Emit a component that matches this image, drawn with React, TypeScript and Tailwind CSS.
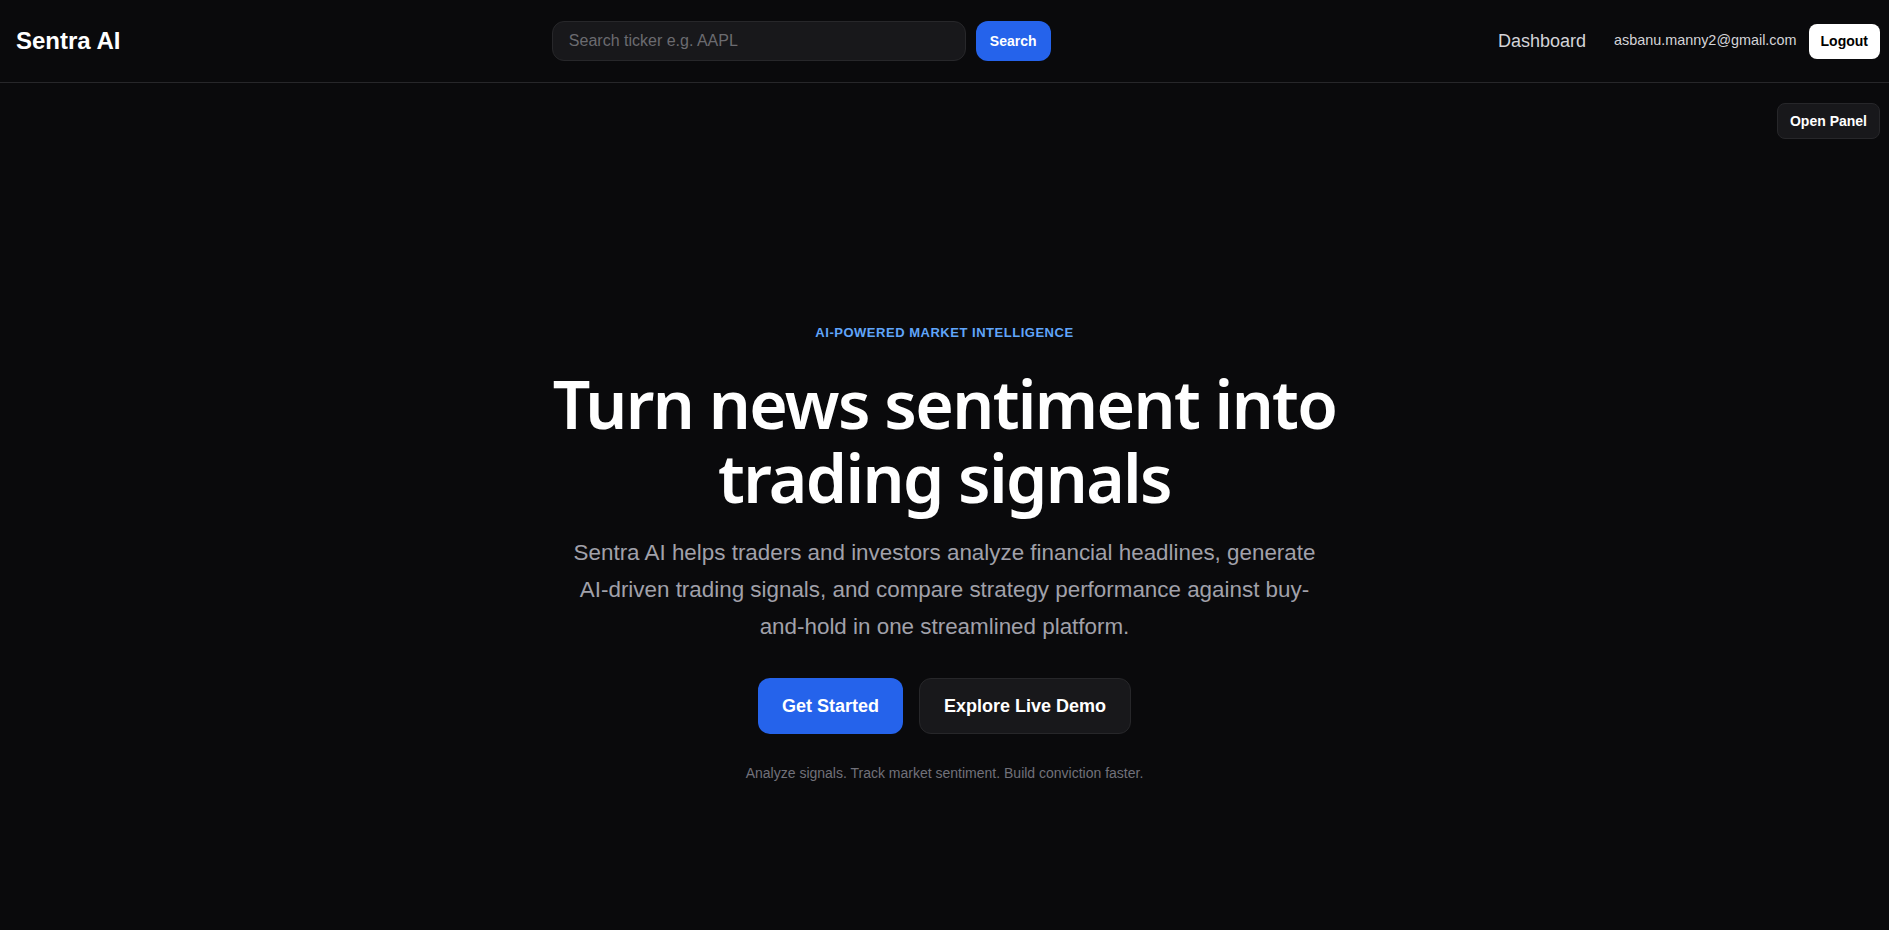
import { FC } from "react";

const Header: FC = () => {
  return (
    <header className="flex h-[83px] items-center justify-between border-b border-[#27272a] pl-4 pr-[9px]">
      <div className="text-2xl font-bold text-white">Sentra AI</div>

      <form
        className="flex items-center gap-2.5"
        onSubmit={(e) => e.preventDefault()}
      >
        <input
          type="text"
          placeholder="Search ticker e.g. AAPL"
          className="h-10 w-[414px] rounded-xl border border-[#27272a] bg-[#18181b] px-4 text-base text-white outline-none placeholder:text-[#6b6b70]"
        />
        <button
          type="submit"
          className="h-10 rounded-xl bg-[#2563eb] px-[14px] text-sm font-bold text-white"
        >
          Search
        </button>
      </form>

      <nav className="flex items-center gap-3">
        <a href="#" className="py-1 pl-4 pr-[16px] text-lg text-[#d4d4d8]">
          Dashboard
        </a>
        <span className="text-[14.4px] text-[#d4d4d8]">
          asbanu.manny2@gmail.com
        </span>
        <button className="h-[35px] rounded-lg bg-white px-3 text-sm font-bold text-black">
          Logout
        </button>
      </nav>
    </header>
  );
};

const Hero: FC = () => {
  return (
    <section className="flex flex-col items-center pt-[184px] text-center">
      <p className="text-[13px] font-bold uppercase leading-5 tracking-[0.04em] text-[#60a5fa]">
        AI-Powered Market Intelligence
      </p>

      <h1
        className="mt-[23px] text-[66px] font-semibold leading-[74px] tracking-[-0.025em] text-white"
        style={{ fontFamily: '"Noto Sans", "Open Sans", sans-serif' }}
      >
        Turn news sentiment into
        <br />
        trading signals
      </h1>

      <p className="mt-5 max-w-3xl text-[22.4px] leading-[37px] text-[#a1a1aa]">
        Sentra AI helps traders and investors analyze financial headlines,
        generate AI-driven trading signals, and compare strategy performance
        against buy-and-hold in one streamlined platform.
      </p>

      <div className="mt-[33px] flex items-center gap-4">
        <button className="rounded-xl bg-[#2563eb] px-6 py-3.5 text-lg font-bold text-white">
          Get Started
        </button>
        <button className="rounded-xl border border-[#27272a] bg-[#18181b] px-6 py-[13px] text-lg font-bold text-white">
          Explore Live Demo
        </button>
      </div>

      <p className="mt-[29px] text-sm text-[#71717a]">
        Analyze signals. Track market sentiment. Build conviction faster.
      </p>
    </section>
  );
};

const App: FC = () => {
  return (
    <div
      className="min-h-screen bg-[#0a0a0c]"
      style={{ fontFamily: '"Liberation Sans", Arial, sans-serif' }}
    >
      <Header />

      <div className="flex justify-end pr-[9px] pt-5">
        <button className="rounded-lg border border-[#27272a] bg-[#18181b] px-3 py-[7px] text-sm font-bold text-white">
          Open Panel
        </button>
      </div>

      <Hero />
    </div>
  );
};

export default App;
